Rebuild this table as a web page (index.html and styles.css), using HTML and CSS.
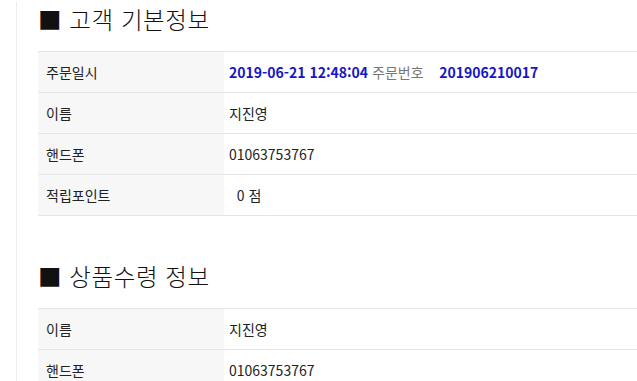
FILE: index.html
```html
<!DOCTYPE html>
<html lang="ko">
<head>
<meta charset="utf-8">
<link rel="stylesheet" href="styles.css">
</head>
<body>
<div class="wrap">
  <h2 class="title first">■ 고객 기본정보</h2>
  <table class="info">
    <tr><th>주문일시</th><td><b class="blue">2019-06-21 12:48:04</b> <span class="gray">주문번호</span>&nbsp;&nbsp;&nbsp; <b class="blue">201906210017</b></td></tr>
    <tr><th>이름</th><td>지진영</td></tr>
    <tr><th>핸드폰</th><td>01063753767</td></tr>
    <tr><th>적립포인트</th><td>&nbsp; 0 점</td></tr>
  </table>
  <h2 class="title">■ 상품수령 정보</h2>
  <table class="info">
    <tr><th>이름</th><td>지진영</td></tr>
    <tr><th>핸드폰</th><td>01063753767</td></tr>
  </table>
</div>
</body>
</html>
```

FILE: styles.css
```css
html, body {
  margin: 0;
  padding: 0;
  background: #fff;
  overflow: hidden;
}
body {
  font-family: "Noto Sans CJK KR", "Noto Sans", sans-serif;
  color: #222;
}
.wrap {
  margin-left: 16px;
  border-left: 1px solid #ececec;
  padding-left: 21px;
  min-height: 100vh;
}
.title {
  font-size: 23.5px;
  font-weight: 300;
  letter-spacing: 0.6px;
  line-height: 34px;
  margin: 43px 0 15px;
  color: #111;
}
.title.first {
  margin-top: 2px;
}
.info {
  width: 100%;
  border-collapse: collapse;
  border-top: 1px solid #e6e6e6;
  font-size: 14px;
}
.info th, .info td {
  height: 40px;
  border-bottom: 1px solid #e6e6e6;
  padding: 0;
  text-align: left;
  font-weight: normal;
}
.info th {
  width: 178px;
  padding-left: 8px;
  background: #f7f7f7;
}
.info td {
  padding-left: 5px;
}
.blue {
  color: #1616c6;
  font-weight: bold;
}
.gray {
  color: #777;
}
```
